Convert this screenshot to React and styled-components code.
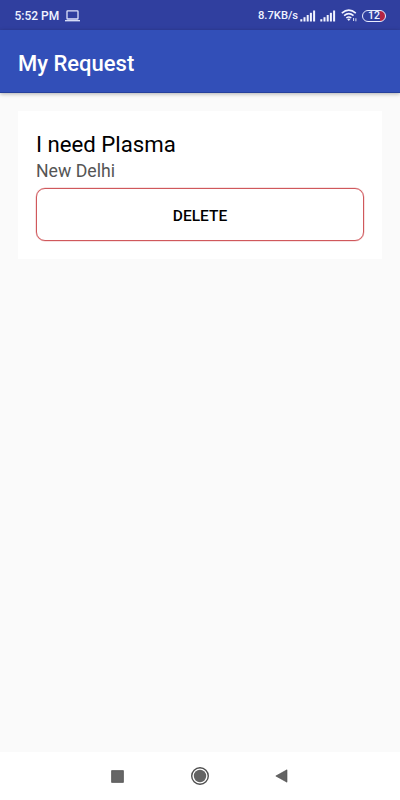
import React from "react";
import styled, { createGlobalStyle } from "styled-components";

const GlobalStyle = createGlobalStyle`
  * { box-sizing: border-box; }
  body {
    margin: 0;
    background: #fafafa;
    font-family: Roboto, "Liberation Sans", sans-serif;
  }
`;

const Screen = styled.div`
  display: flex;
  flex-direction: column;
  height: 100vh;
  min-height: 800px;
  background: #fafafa;
`;

const StatusBar = styled.div`
  flex: none;
  display: flex;
  justify-content: space-between;
  align-items: center;
  height: 30px;
  padding: 1px 14px 0 14.5px;
  background: #303f9f;
  color: #f0f3ff;
  white-space: nowrap;
`;

const StatusGroup = styled.div`
  display: flex;
  align-items: center;
  svg { display: block; flex: none; }
`;

const Clock = styled.span`
  width: 50.5px;
  font-size: 12px;
  font-weight: 500;
`;

const NetSpeed = styled.span`
  width: 42px;
  font-size: 11.2px;
  line-height: 14px;
  padding-top: 1px;
  font-weight: 500;
`;

const AppBar = styled.header`
  flex: none;
  display: flex;
  align-items: center;
  height: 63px;
  padding: 0 18px 0;
  background: #324fb8;
  border-bottom: 1px solid #26409c;
  box-shadow: 0 1px 4px rgba(0, 0, 0, 0.3);
  z-index: 1;
`;

const Title = styled.h1`
  margin: 5px 0 0;
  font-size: 22px;
  line-height: 28px;
  font-weight: 500;
  color: #fff;
`;

const Content = styled.main`
  flex: 1;
  padding: 18px;
`;

const Card = styled.section`
  height: 148px;
  padding: 19px 18px 17px;
  background: #fff;
`;

const RequestTitle = styled.h2`
  margin: 0 0 1px;
  font-size: 22.2px;
  line-height: 28px;
  font-weight: 400;
  color: #000;
`;

const Location = styled.p`
  margin: 0 0 4px;
  font-size: 17.7px;
  line-height: 25px;
  color: #555;
`;

const DeleteButton = styled.button`
  display: block;
  width: 100%;
  height: 53px;
  padding: 2px 0 0;
  background: #fff;
  border: 1px solid #d0585c;
  border-radius: 9px;
  box-shadow: 0 0 0 0.5px rgba(208, 88, 92, 0.35);
  font-family: inherit;
  font-size: 15.5px;
  font-weight: 500;
  color: #000;
`;

const NavBar = styled.nav`
  flex: none;
  display: grid;
  grid-template-columns: 83px 83px 80px;
  justify-content: start;
  padding-left: 75.5px;
  align-items: center;
  justify-items: center;
  height: 48px;
  background: #fff;
  svg { display: block; }
`;

const LaptopIcon = () => (
  <svg width="15" height="12" viewBox="0 0 15 12" fill="none" stroke="#dfe4fb">
    <rect x="2" y="0.8" width="11" height="8.2" rx="0.6" strokeWidth="1.3" />
    <path d="M0 10.7H15" strokeWidth="1.3" />
  </svg>
);

const SignalIcon = () => (
  <svg width="16" height="12" viewBox="0 0 16 12" fill="#f2f4ff">
    <rect x="0.3" y="9.2" width="2" height="2.3" />
    <rect x="3.5" y="7.2" width="2" height="4.3" />
    <rect x="6.7" y="5" width="2" height="6.5" />
    <rect x="9.9" y="2.8" width="2" height="8.7" />
    <rect x="13.1" y="0.5" width="2" height="11" />
  </svg>
);

const WifiIcon = () => (
  <svg width="17" height="13" viewBox="0 0 17 13" fill="none" stroke="#f2f4ff">
    <path d="M0.8 4.2Q7.8 -1.8 14.8 4.2" strokeWidth="1.6" />
    <path d="M3.1 6.7Q7.8 2.7 12.5 6.7" strokeWidth="1.6" />
    <path d="M5.3 9Q7.8 7 10.3 9" strokeWidth="1.5" />
    <path d="M6.1 10L7.8 12L9.5 10Q7.8 8.8 6.1 10Z" fill="#f2f4ff" stroke="none" />
    <path d="M12.6 9V12M14.9 9.3V12.3" strokeWidth="0.9" />
  </svg>
);

const Battery = styled.div`
  display: flex;
  align-items: center;
  justify-content: center;
  width: 24px;
  height: 12px;
  border: 1px solid #e8ecff;
  border-radius: 6px;
  background: linear-gradient(90deg, transparent 78%, #b52343 78%);
  font-size: 10.5px;
  line-height: 10px;
  font-weight: 500;
`;

const Signals = styled.div`
  display: flex;
  gap: 4px;
  margin-right: 5px;
`;

const WifiSlot = styled.div`
  margin-right: 4px;
`;

const RecentsIcon = () => (
  <svg width="13" height="13" viewBox="0 0 13 13">
    <rect x="0.7" y="0.7" width="11.6" height="11.6" fill="#666" stroke="#4d4d4d" strokeWidth="0.8" />
  </svg>
);

const HomeIcon = () => (
  <svg width="20" height="20" viewBox="0 0 20 20">
    <circle cx="10" cy="10" r="8.3" fill="none" stroke="#505050" strokeWidth="1.4" />
    <circle cx="10" cy="10" r="6.2" fill="#636363" />
  </svg>
);

const BackIcon = () => (
  <svg width="13" height="14" viewBox="0 0 13 14">
    <path d="M12 0.8V13.2L0.8 7Z" fill="#636363" stroke="#4d4d4d" strokeWidth="0.6" />
  </svg>
);

const requests = [{ id: 1, title: "I need Plasma", city: "New Delhi" }];

const App = () => {
  return (
    <Screen>
      <GlobalStyle />
      <StatusBar>
        <StatusGroup>
          <Clock>5:52 PM</Clock>
          <LaptopIcon />
        </StatusGroup>
        <StatusGroup>
          <NetSpeed>8.7KB/s</NetSpeed>
          <Signals>
            <SignalIcon />
            <SignalIcon />
          </Signals>
          <WifiSlot><WifiIcon /></WifiSlot>
          <Battery>12</Battery>
        </StatusGroup>
      </StatusBar>

      <AppBar>
        <Title>My Request</Title>
      </AppBar>

      <Content>
        {requests.map(request => (
          <Card key={request.id}>
            <RequestTitle>{request.title}</RequestTitle>
            <Location>{request.city}</Location>
            <DeleteButton>DELETE</DeleteButton>
          </Card>
        ))}
      </Content>

      <NavBar>
        <RecentsIcon />
        <HomeIcon />
        <BackIcon />
      </NavBar>
    </Screen>
  );
};

export default App;
